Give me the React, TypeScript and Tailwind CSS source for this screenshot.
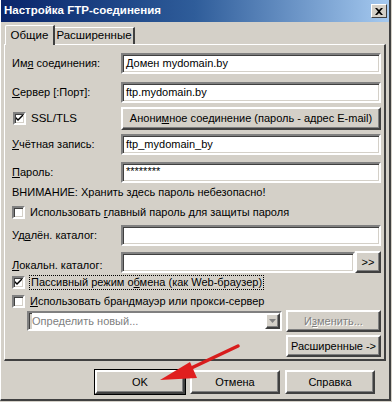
import type { ReactNode } from 'react';

const edge =
  'border-2 border-t-[#808080] border-l-[#808080] border-b-white border-r-white shadow-[inset_1px_1px_0_#404040,inset_-1px_-1px_0_#d4d0c8]';
const raised =
  'border-2 border-t-white border-l-white border-b-[#404040] border-r-[#404040] shadow-[inset_-1px_-1px_0_#808080]';

const Field = ({ children, className = '' }: { children?: ReactNode; className?: string }) => (
  <div className={`h-[21px] bg-white ${edge} flex items-center pl-[3px] text-[11px] leading-none ${className}`}>
    <span className="whitespace-nowrap">{children}</span>
  </div>
);

const Btn = ({ children, className = '', disabled = false }: { children: ReactNode; className?: string; disabled?: boolean }) => (
  <div
    className={`${raised} bg-[#d4d0c8] flex items-center justify-center text-[11px] ${
      disabled ? 'text-[#808080] [text-shadow:1px_1px_0_#fff]' : 'text-black'
    } ${className}`}
  >
    <span className="whitespace-nowrap">{children}</span>
  </div>
);

const Check = ({ checked = false }: { checked?: boolean }) => (
  <div className={`w-[13px] h-[13px] bg-white ${edge} flex items-center justify-center shrink-0`}>
    {checked && (
      <svg width="7" height="7" viewBox="0 0 7 7">
        <path d="M0 2 L0 4 L2 6 L7 1 L7 -1 L2 4 Z" fill="#000" />
      </svg>
    )}
  </div>
);

const Row = ({ label, children, className = '' }: { label: ReactNode; children: ReactNode; className?: string }) => (
  <div className={`flex items-center ${className}`}>
    <div className="w-[109px] shrink-0 text-[11px] whitespace-nowrap">{label}</div>
    {children}
  </div>
);

const App = () => {
  return (
    <div className="w-[392px] h-[402px] overflow-hidden relative bg-[#d4d0c8] font-['Liberation_Sans',Arial,sans-serif] text-black">
      <div className="w-[391px] h-[401px] flex flex-col border-l-[1px] border-l-white border-r-[2px] border-r-[#404040] border-b-[2px] border-b-[#404040]">
        {/* title bar */}
        <div className="h-[22px] flex items-center justify-between pl-[3px] pr-[2px] bg-linear-to-r from-[#0a246a] via-[#2f5d9a] to-[#a6caf0]">
          <span className="text-white font-bold text-[11.5px]">Настройка FTP-соединения</span>
          <div className="w-[16px] h-[14px] bg-[#d4d0c8] border border-t-white border-l-white border-b-[#404040] border-r-[#404040] flex items-center justify-center">
            <svg width="8" height="7" viewBox="0 0 8 7">
              <path d="M0 0 L2 0 L4 2 L6 0 L8 0 L5 3.5 L8 7 L6 7 L4 5 L2 7 L0 7 L3 3.5 Z" fill="#000" />
            </svg>
          </div>
        </div>

        {/* tabs */}
        <div className="flex items-end pl-[4px] mt-[2px] h-[20px] relative z-10">
          <div className="w-[50px] h-[20px] bg-[#d4d0c8] border-l border-t border-l-white border-t-white border-r-2 border-r-[#404040] rounded-tl-[2px] flex items-center justify-center text-[11.5px] -mb-[1px]">
            Общие
          </div>
          <div className="w-[80px] h-[17px] border-t border-t-white border-r-2 border-r-[#404040] flex items-center justify-center text-[11.5px]">
            Расширенные
          </div>
        </div>

        {/* panel */}
        <div className="ml-[3px] w-[382px] h-[317px] border-t border-l border-t-white border-l-white border-r-2 border-b-2 border-r-[#404040] border-b-[#404040] flex flex-col pl-[7px] pr-[3px] pt-[8px]">
          <Row label={<>Им<u>я</u> соединения:</>}>
            <Field className="flex-1">Домен mydomain.by</Field>
          </Row>
          <Row label={<><u>С</u>ервер [:Порт]:</>} className="mt-[8px]">
            <Field className="flex-1">ftp.mydomain.by</Field>
          </Row>
          <div className="flex items-center mt-[4px]">
            <div className="w-[109px] shrink-0 flex items-center gap-[5px] pl-[1px] text-[11.5px]">
              <Check checked />
              <span>SSL/TLS</span>
            </div>
            <Btn className="flex-1 h-[23px]">
              Анони<u>м</u>ное соединение (пароль - адрес E-mail)
            </Btn>
          </div>
          <Row label={<><u>У</u>чётная запись:</>} className="mt-[4px]">
            <Field className="flex-1">ftp_mydomain_by</Field>
          </Row>
          <Row label={<><u>П</u>ароль:</>} className="mt-[7px]">
            <Field className="flex-1 items-start pt-[2px] text-[9px]">********</Field>
          </Row>
          <div className="h-[16px] mt-[1px] flex items-center text-[11px]">
            <span>ВНИМАНИЕ: Хранить здесь пароль небезопасно!</span>
          </div>
          <div className="h-[16px] mt-[4px] flex items-center gap-[5px] text-[11px]">
            <Check />
            <span>
              Использовать <u>г</u>лавный пароль для защиты пароля
            </span>
          </div>
          <Row label={<>Уд<u>а</u>лён. каталог:</>} className="mt-[5px]">
            <Field className="flex-1" />
          </Row>
          <Row label={<><u>Л</u>окальн. каталог:</>} className="mt-[5px] items-end">
            <Field className="flex-1" />
            <Btn className="w-[26px] h-[22px]">&gt;&gt;</Btn>
          </Row>
          <div className="h-[16px] mt-[1px] flex items-center gap-[4px] text-[11px]">
            <Check checked />
            <span className="border border-dotted border-black px-[1px] leading-[13px]">
              Пассивный режим о<u>б</u>мена (как Web-браузер)
            </span>
          </div>
          <div className="h-[16px] mt-[3px] flex items-center gap-[5px] text-[11px]">
            <Check />
            <span>
              <u>И</u>спользовать брандмауэр или прокси-сервер
            </span>
          </div>
          <div className="flex items-center mt-[1px] pl-[15px] gap-[4px]">
            <div className={`w-[255px] h-[20px] bg-[#d4d0c8] ${edge} flex items-center justify-between text-[11px] text-[#808080] pl-[3px]`}>
              <span className="h-full flex-1 bg-white flex items-center">Определить новый...</span>
              <div className={`w-[15px] h-full ${raised} border-t-[#d4d0c8] border-l-[#d4d0c8] bg-[#d4d0c8] flex items-center justify-center`}>
                <svg width="7" height="4" viewBox="0 0 7 4">
                  <path d="M0 0 L7 0 L3.5 4 Z" fill="#808080" />
                </svg>
              </div>
            </div>
            <Btn disabled className="w-[95px] h-[22px]">
              И<u>з</u>менить...
            </Btn>
          </div>
          <div className="flex justify-end mt-[3px]">
            <Btn className="w-[95px] h-[22px]">Расширенные -&gt;</Btn>
          </div>
        </div>

        {/* bottom buttons */}
        <div className="flex justify-end gap-[5px] pr-[14px] mt-[9px]">
          <Btn className="w-[90px] h-[24px] outline outline-1 outline-black">OK</Btn>
          <Btn className="w-[90px] h-[24px]">Отмена</Btn>
          <Btn className="w-[90px] h-[24px]">Справка</Btn>
        </div>
      </div>

      {/* red arrow overlay */}
      <svg className="absolute left-0 top-0 pointer-events-none" width="392" height="402" viewBox="0 0 392 402">
        <line x1="238" y1="346" x2="185" y2="371" stroke="#d81c1c" strokeWidth="3.5" strokeLinecap="round" />
        <path d="M160 380 L190 362 L197 378 Z" fill="#e01e1e" />
      </svg>
    </div>
  );
};

export default App;
